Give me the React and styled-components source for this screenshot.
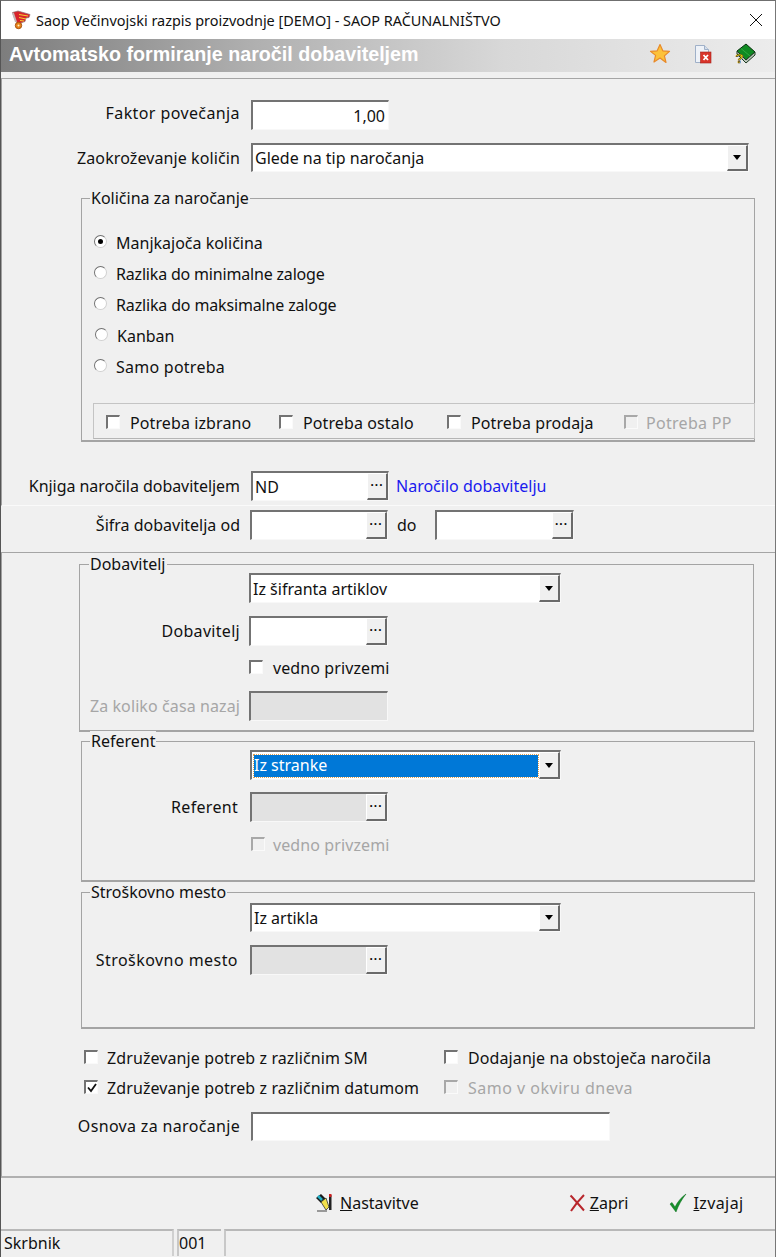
import React from "react";
import styled, { createGlobalStyle } from "styled-components";

const Global = createGlobalStyle`
  html, body { margin: 0; padding: 0; background: #f0f0f0; }
  * { box-sizing: border-box; }
`;

const Window = styled.div`
  width: 776px; height: 1257px; overflow: hidden;
  background: #f0f0f0;
  border-top: 1px solid #6f6f6f;
  border-left: 1px solid #555;
  border-right: 1px solid #777;
  font-family: "Noto Sans", Tahoma, sans-serif;
  font-size: 16px; color: #111;
  display: flex; flex-direction: column;
`;
const TitleBar = styled.div`
  height: 38px; background: #fff; display: flex; align-items: center;
  padding: 0 12px 0 10px; font-size: 14.45px; color: #111;
`;
const TitleText = styled.span` margin-left: 5px; flex: 1; white-space: nowrap; `;
const Header = styled.div`
  height: 33px; display: flex; align-items: center;
  padding: 0 18px 3px 8px;
  background: linear-gradient(90deg, #7d7d7d 0%, #b0b0b0 33%, #d8d8d8 65%, #ececec 100%);
`;
const HeaderTitle = styled.h1`
  margin: 0; flex: 1; font-family: "Liberation Sans", Arial, sans-serif;
  font-size: 19.7px; font-weight: 700; color: #fff; white-space: nowrap;
`;
const HeaderIcons = styled.div` display: flex; align-items: center; gap: 23px; `;
const TopPanel = styled.section`
  margin-top: 6px; height: 428px; padding-top: 21px;
  border-top: 1px solid #a5a5a5; border-left: 1px solid #a0a0a0;
  border-bottom: 1px solid #fafafa; 
`;
const Band = styled.section` height: 46px; padding-top: 4px; `;
const BottomPanel = styled.section`
  height: 626px; padding-top: 11px;
  border-top: 1px solid #a5a5a5; border-left: 1px solid #a0a0a0;
  border-bottom: 2px solid #b0b0b0;
`;
const Row = styled.div`
  display: flex; align-items: center;
  margin-top: ${p => p.$mt || 0}px;
`;
const Label = styled.label`
  width: ${p => p.$w || 238}px; margin-right: ${p => p.$gap || 11}px;
  margin-bottom: ${p => p.$up || 0}px;
  flex: none; text-align: right; white-space: nowrap; line-height: 20px;
  letter-spacing: ${p => p.$sp || 0}px;
  color: ${p => (p.$off ? "#a6a6a6" : "#111")};
`;
const Sunken = styled.div`
  width: ${p => p.$w}px; height: ${p => p.$h || 30}px; flex: none;
  display: flex; align-items: center; justify-content: ${p => (p.$right ? "flex-end" : "flex-start")};
  background: ${p => (p.$off ? "#e2e2e2" : "#fff")};
  border-top: 2px solid #737373; border-left: 2px solid #737373;
  border-bottom: 1px solid #f8f8f8; border-right: 1px solid #f8f8f8;
  padding: 0 0 0 2px; white-space: nowrap; overflow: hidden;
`;
const Value = styled.span` flex: 1; padding: ${p => (p.$right ? "0 3px 0 0" : "0")}; text-align: ${p => (p.$right ? "right" : "left")}; `;
const Selected = styled.span`
  flex: 1; height: 22px; line-height: 20px; background: #0078d7; color: #fff;
  margin: 0 1px 0 0; outline: 1px dotted #e0a050; 
`;
const SideButton = styled.div`
  width: 21px; height: 100%; flex: none; background: #f0f0f0;
  border-left: 1px solid #fff; border-top: 1px solid #fff;
  border-right: 2px solid #6a6a6a; border-bottom: 2px solid #6a6a6a;
  display: flex; align-items: center; justify-content: center;
`;
const Arrow = styled.i`
  width: 0; height: 0; border-left: 4px solid transparent; border-right: 4px solid transparent;
  border-top: 5px solid #000;
`;
const Dots = styled.span`
  font-family: "Liberation Sans", sans-serif; font-weight: 700; font-size: 12px; letter-spacing: 0.3px; line-height: 1;
  margin-top: -2px;
`;
const LinkText = styled.span` margin-left: 7px; color: #1a1aee; `;
const InlineText = styled.span` margin: 0 ${p => p.$r || 0}px 0 ${p => p.$l || 0}px; `;
const Group = styled.fieldset`
  position: relative; margin: ${p => p.$mt || 0}px 0 0 ${p => p.$ml || 79}px; padding: ${p => p.$pt || 0}px 0 0 0;
  width: ${p => p.$w || 674}px; height: ${p => p.$h}px;
  border: 1px solid #a4a4a4; border-bottom-width: 2px;
`;
const Legend = styled.span`
  position: absolute; top: -11px; left: ${p => p.$l || 8}px; padding: 0 1px; background: #f0f0f0; line-height: 20px; 
`;
const RadioRow = styled.div`
  height: 31px; display: flex; align-items: center; padding-left: ${p => p.$pl || 12}px;
  letter-spacing: ${p => p.$sp || 0}px;
`;
const Radio = styled.span`
  width: 13px; height: 13px; border-radius: 50%; flex: none; margin-right: 9px; margin-top: -3px;
  background: #fff; border: 1px solid #d0d0d0; border-top-color: #707070; border-left-color: #707070;
  display: flex; align-items: center; justify-content: center;
  &::after { content: ""; width: 5px; height: 5px; border-radius: 50%; background: ${p => (p.$on ? "#000" : "transparent")}; }
`;
const Inset = styled.div`
  margin: 21px -1px 0 11px; height: 36px; display: flex; align-items: center; padding: 3px 0 0 12px;
  border: 1px solid #c4c4c4; border-bottom-color: #b5b5b5;
`;
const Check = styled.div`
  display: flex; align-items: center; height: 20px; width: ${p => (p.$w ? `${p.$w}px` : "auto")};
  color: ${p => (p.$off ? "#a6a6a6" : "#111")}; white-space: nowrap; flex: none;
  margin-left: ${p => p.$ml || 0}px; margin-top: ${p => p.$mt || 0}px;
  letter-spacing: ${p => p.$sp || 0.1}px;
`;
const Box = styled.span`
  width: 14px; height: 14px; flex: none; margin-right: ${p => p.$gap || 10}px; margin-top: -2px;
  background: ${p => (p.$off ? "#f0f0f0" : "#fff")};
  border-top: 2px solid ${p => (p.$off ? "#a8a8a8" : "#737373")}; border-left: 2px solid ${p => (p.$off ? "#a8a8a8" : "#737373")};
  border-bottom: 1px solid #fafafa; border-right: 1px solid #fafafa;
  display: flex; align-items: center; justify-content: center;
`;
const Footer = styled.footer`
  height: 51px; display: flex; align-items: center; padding-left: 313px; padding-bottom: 1px;
`;
const FootButton = styled.div`
  display: flex; align-items: center; gap: ${p => p.$gap || 4}px; margin-left: ${p => p.$ml || 0}px; white-space: nowrap;
  letter-spacing: ${p => p.$sp || 0}px;
`;
const StatusBar = styled.footer` height: 27px; display: flex; gap: 3px; `;
const StatusCell = styled.div`
  width: ${p => (p.$w ? `${p.$w}px` : "auto")}; flex: ${p => (p.$w ? "none" : 1)};
  border-top: 2px solid #b8b8b8; border-left: 2px solid #c8c8c8; padding: 1px 0 0 0; line-height: 22px;
  &:first-child { border-left: none; padding-left: 3px; border-right: 2px solid #d0d0d0; }
`;

const Star = () => (
  <svg width="22" height="22" viewBox="0 0 22 22"><path d="M11 1.5l2.8 6.3 6.700.6-5.100 4.500 1.600 6.600L11 15.100l-6 3.900 1.600-6.600L1.500 8.400l6.700-.6z" fill="#fcc23a" stroke="#e88a2a" strokeWidth="1.200" strokeLinejoin="round"/></svg>
);
const DocX = () => (
  <svg width="18" height="20" viewBox="0 0 18 20"><path d="M1.500 1.500h9l4 4v13h-13z" fill="#eef2f8" stroke="#9fb0c8"/><path d="M10.500 1.500v4h4" fill="#d5deea" stroke="#9fb0c8"/><rect x="6.500" y="8" width="10.500" height="11" fill="#d9352b" stroke="#a52018" strokeWidth=".6"/><path d="M9.500 11l4.500 5M14 11l-4.500 5" stroke="#fff" strokeWidth="1.800"/></svg>
);
const Book = () => (
  <svg width="22" height="22" viewBox="0 0 22 22"><path d="M2 8L11 1l9 8-9 8z" fill="#0e8a22" stroke="#06300c"/><path d="M2 8v3l9 9 9-8V9l-9 8z" fill="#b9c4b9" stroke="#1c3a20"/><path d="M6 5.500l9 7.500" stroke="#35b548" strokeWidth=".8"/><text x="0.500" y="20" fontFamily="Liberation Sans" fontWeight="700" fontSize="13" fill="#ffe600" stroke="#222" strokeWidth=".5">?</text></svg>
);
const AppLogo = () => (
  <svg width="20" height="20" viewBox="0 0 20 20"><path d="M1.500 2.500L7 1l12 3.500-1 3-3 .5-1 3.500-3 1-4 2-3-5z" fill="#d8232a" stroke="#8a7070" strokeWidth=".7"/><path d="M2 3l3 9" stroke="#c4b4b4" strokeWidth="2"/><path d="M8 4.500l9 1.500M8 7.500l7 1.500M9 10.500l4 .5" stroke="#f6d030" strokeWidth="1"/><circle cx="7.500" cy="15.500" r="3.200" fill="#e8821a" stroke="#a85410"/><circle cx="7.500" cy="15.500" r="1" fill="#fff3c0"/></svg>
);
const Close = () => (
  <svg width="14" height="14" viewBox="0 0 14 14"><path d="M1 1l12 12M13 1L1 13" stroke="#111" strokeWidth="1"/></svg>
);
const Tool = () => (
  <svg width="20" height="22" viewBox="0 0 20 22"><path d="M3 19h10" stroke="#999" strokeWidth="2"/><path d="M2 6l5-4 5 5-5 4z" fill="#1a1a1a"/><path d="M4 4l4 4" stroke="#20b0c8" strokeWidth="2.500"/><path d="M7 10l5-4 3 9-3 3z" fill="#f2e04a" stroke="#333" strokeWidth=".8"/><path d="M15 3h2.500v15H15z" fill="#222"/><path d="M15 2h2.500v3H15z" fill="#d02020"/></svg>
);
const RedX = () => (
  <svg width="17" height="18" viewBox="0 0 17 18"><path d="M1.500 1.500c4 4 9 10 13.500 15M15 1C10 6 6 11 2 17" stroke="#b8262c" strokeWidth="2" fill="none"/></svg>
);
const GreenCheck = () => (
  <svg width="18" height="20" viewBox="0 0 18 20"><path d="M1 11l2-1.500 3 4.500C8.500 9 12 4.500 17 1c-4 5-7.500 11-10 18z" fill="#15902a" stroke="#0d6a1c" strokeWidth=".5"/></svg>
);
const Tick = () => (
  <svg width="10" height="10" viewBox="0 0 10 10"><path d="M1 4.500l3 3.500L9 1" stroke="#111" strokeWidth="1.800" fill="none"/></svg>
);

const Select = ({ w, h, children, selected }) => (
  <Sunken $w={w} $h={h}>
    {selected ? <Selected>{children}</Selected> : <Value>{children}</Value>}
    <SideButton><Arrow /></SideButton>
  </Sunken>
);
const Lookup = ({ w = 138, off, children }) => (
  <Sunken $w={w} $off={off}>
    <Value>{children}</Value>
    <SideButton><Dots>···</Dots></SideButton>
  </Sunken>
);
const Checkbox = ({ label, off, on, w, ml, mt, gap, sp }) => (
  <Check $off={off} $w={w} $ml={ml} $mt={mt} $sp={sp}>
    <Box $off={off} $gap={gap}>{on && <Tick />}</Box>
    {label}
  </Check>
);

const radios = [
  ["Manjkajoča količina", true, 12, 0],
  ["Razlika do minimalne zaloge", false, 12, -0.18],
  ["Razlika do maksimalne zaloge", false, 12, -0.15],
  ["Kanban", false, 13, 0],
  ["Samo potreba", false, 12, 0.25],
];

export default function App() {
  return (
    <Window>
      <Global />
      <TitleBar>
        <AppLogo />
        <TitleText>Saop Večinvojski razpis proizvodnje [DEMO] - SAOP RAČUNALNIŠTVO</TitleText>
        <Close />
      </TitleBar>
      <Header>
        <HeaderTitle>Avtomatsko formiranje naročil dobaviteljem</HeaderTitle>
        <HeaderIcons><Star /><DocX /><Book /></HeaderIcons>
      </Header>
      <TopPanel>
        <Row>
          <Label $sp={0.4} $up={4}>Faktor povečanja</Label>
          <Sunken $w={138} $right><Value $right>1,00</Value></Sunken>
        </Row>
        <Row $mt={13}>
          <Label $sp={0.1}>Zaokroževanje količin</Label>
          <Select w={498} h={29}>Glede na tip naročanja</Select>
        </Row>
        <Group $mt={26} $h={244} $pt={28}>
          <Legend>Količina za naročanje</Legend>
          {radios.map(([t, on, pl, sp]) => (
            <RadioRow key={t} $pl={pl} $sp={sp}><Radio $on={on} />{t}</RadioRow>
          ))}
          <Inset>
            <Checkbox w={173} label="Potreba izbrano" />
            <Checkbox w={168} label="Potreba ostalo" />
            <Checkbox w={177} label="Potreba prodaja" />
            <Checkbox off gap={8} sp={0.3} label="Potreba PP" />
          </Inset>
        </Group>
        <Row $mt={29}>
          <Label $sp={-0.05}>Knjiga naročila dobaviteljem</Label>
          <Lookup>ND</Lookup>
          <LinkText>Naročilo dobavitelju</LinkText>
        </Row>
      </TopPanel>
      <Band>
        <Row>
          <Label $w={239} $gap={10}>Šifra dobavitelja od</Label>
          <Lookup />
          <InlineText $l={9} $r={18}>do</InlineText>
          <Lookup w={139} />
        </Row>
      </Band>
      <BottomPanel>
        <Group $ml={77} $w={675} $h={168} $pt={8}>
          <Legend $l={9}>Dobavitelj</Legend>
          <Row>
            <Label $w={160} $gap={9} />
            <Select w={312}>Iz šifranta artiklov</Select>
          </Row>
          <Row $mt={13}>
            <Label $w={160} $gap={9} $sp={0.3}>Dobavitelj</Label>
            <Lookup w={139} />
          </Row>
          <Checkbox ml={169} mt={12} label="vedno privzemi" />
          <Row $mt={13}>
            <Label $w={160} $gap={9} $off $sp={0.1}>Za koliko časa nazaj</Label>
            <Sunken $w={139} $off />
          </Row>
        </Group>
        <Group $mt={9} $h={141} $pt={8}>
          <Legend>Referent</Legend>
          <Row>
            <Label $w={157} />
            <Select w={311} selected>Iz stranke</Select>
          </Row>
          <Row $mt={12}>
            <Label $w={156} $gap={12} $sp={0.3}>Referent</Label>
            <Lookup off />
          </Row>
          <Checkbox off ml={169} mt={13} gap={8} label="vedno privzemi" />
        </Group>
        <Group $mt={10} $h={137} $pt={10}>
          <Legend>Stroškovno mesto</Legend>
          <Row>
            <Label $w={157} />
            <Select w={311} h={29}>Iz artikla</Select>
          </Row>
          <Row $mt={13}>
            <Label $w={156} $gap={12} $sp={0.45}>Stroškovno mesto</Label>
            <Lookup off />
          </Row>
        </Group>
        <Row $mt={19}>
          <Checkbox ml={82} w={360} gap={9} label="Združevanje potreb z različnim SM" />
          <Checkbox gap={10} label="Dodajanje na obstoječa naročila" />
        </Row>
        <Row $mt={10}>
          <Checkbox ml={82} w={360} gap={9} on label="Združevanje potreb z različnim datumom" />
          <Checkbox off gap={10} sp={0.5} label="Samo v okviru dneva" />
        </Row>
        <Row $mt={14}>
          <Label $sp={0.33} $up={2}>Osnova za naročanje</Label>
          <Sunken $w={359} $h={29} />
        </Row>
      </BottomPanel>
      <Footer>
        <FootButton $gap={6}><Tool /><span><u>N</u>astavitve</span></FootButton>
        <FootButton $ml={150} $gap={4}><RedX /><span><u>Z</u>apri</span></FootButton>
        <FootButton $ml={41} $gap={6} $sp={0.4}><GreenCheck /><span><u>I</u>zvajaj</span></FootButton>
      </Footer>
      <StatusBar>
        <StatusCell $w={173}>Skrbnik</StatusCell>
        <StatusCell $w={44}>001</StatusCell>
        <StatusCell />
      </StatusBar>
    </Window>
  );
}
